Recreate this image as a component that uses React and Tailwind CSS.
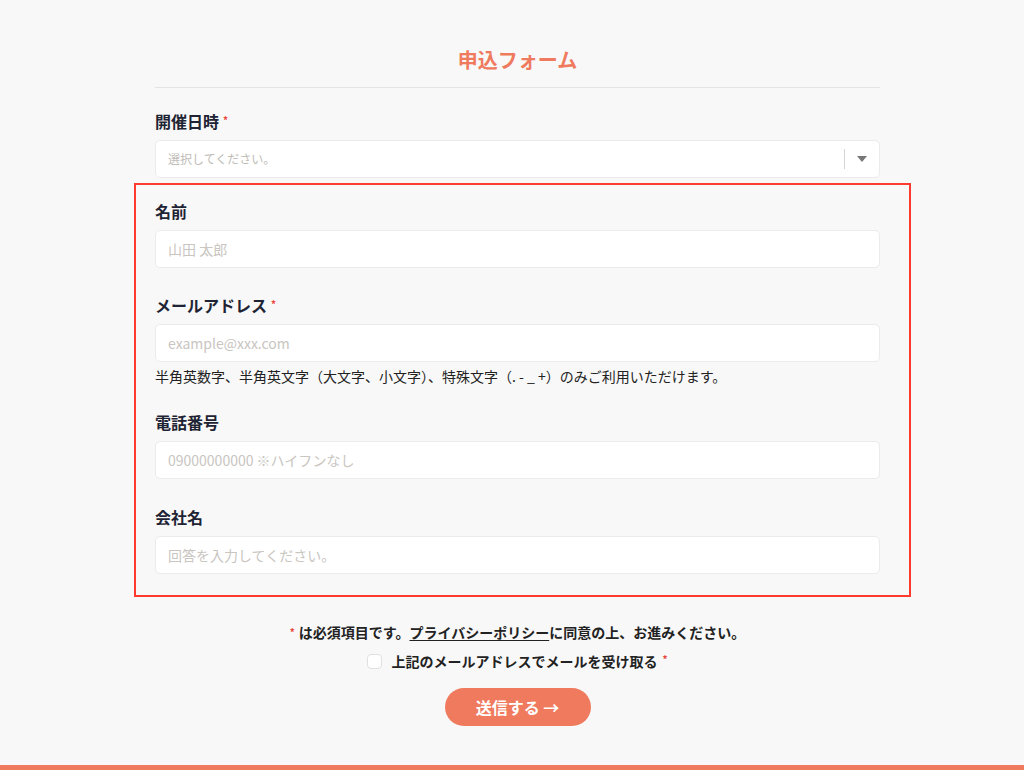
import React from "react";

const font = { fontFamily: '"Noto Sans CJK JP", "Noto Sans", sans-serif' };

function Label({ children, required }) {
  return (
    <div className="mb-2 flex items-center text-[16px] font-bold leading-[22px] text-[#1e2433]">
      <span>{children}</span>
      {required && <span className="ml-1 self-start pt-[2px] text-[10px] leading-[16px] text-[#e8453c]">*</span>}
    </div>
  );
}

function Input({ placeholder }) {
  return (
    <input
      type="text"
      placeholder={placeholder}
      className="block h-[38px] w-full rounded-[5px] border border-[#ebebeb] bg-white px-3 text-[14px] text-[#333] outline-none placeholder:text-[#c9c5bf]"
      style={font}
    />
  );
}

export default function App() {
  return (
    <div className="flex h-[770px] flex-col bg-[#f8f8f8]" style={font}>
      <div className="ml-[155px] w-[725px] pt-[46px]">
        <h1 className="border-b border-[#e3e3e3] pb-[13px] text-center text-[20px] font-bold leading-[28px] text-[#ef7a5e]">
          申込フォーム
        </h1>

        <div className="mt-[22px]">
          <Label required>開催日時</Label>
          <div className="flex h-[38px] w-full items-center rounded-[5px] border border-[#ebebeb] bg-white pl-3">
            <span className="flex-1 text-[12px] text-[#c0bcb6]">選択してください。</span>
            <span className="h-[20px] w-px bg-[#d4d4d4]" />
            <span className="flex w-[34px] justify-center">
              <svg width="10" height="6" viewBox="0 0 10 6">
                <path d="M0 0 L10 0 L5 6 Z" fill="#777" />
              </svg>
            </span>
          </div>
        </div>

        <div className="ml-[-21px] mr-[-31px] mt-[5px] border-2 border-[#ff3b30] pb-[21px] pl-[19px] pr-[29px] pt-[15px]">
          <div className="mb-[26px]">
            <Label>名前</Label>
            <Input placeholder="山田 太郎" />
          </div>
          <div className="mb-[25px]">
            <Label required>メールアドレス</Label>
            <Input placeholder="example@xxx.com" />
            <p className="mt-[4px] text-[14px] leading-[20px] text-[#222]">
              半角英数字、半角英文字（大文字、小文字）、特殊文字（. - _ +）のみご利用いただけます。
            </p>
          </div>
          <div className="mb-[27px]">
            <Label>電話番号</Label>
            <Input placeholder="09000000000 ※ハイフンなし" />
          </div>
          <div>
            <Label>会社名</Label>
            <Input placeholder="回答を入力してください。" />
          </div>
        </div>

        <p className="mt-[24px] text-center text-[14px] font-semibold leading-[22px] text-[#222]">
          <span className="mr-1 align-top text-[10px] text-[#e8453c]">*</span>
          は必須項目です。
          <span className="underline underline-offset-2">プライバシーポリシー</span>
          に同意の上、お進みください。
        </p>

        <label className="mt-[7px] flex items-center justify-center gap-[9px] text-[14px] font-semibold leading-[22px] text-[#222]">
          <span className="h-[15px] w-[15px] rounded-[4px] border border-[#e0e0e0] bg-white" />
          <span>上記のメールアドレスでメールを受け取る</span>
          <span className="-ml-1 self-start pt-[2px] text-[10px] leading-[14px] text-[#e8453c]">*</span>
        </label>

        <div className="mt-[16px] flex justify-center">
          <button
            className="flex h-[38px] w-[146px] items-center justify-center rounded-full bg-[#ef7a5e] text-[16px] font-bold text-white"
            style={font}
          >
            送信する →
          </button>
        </div>
      </div>
      <div className="mt-auto h-[5px] w-full bg-[#ef7a5e]" />
    </div>
  );
}
